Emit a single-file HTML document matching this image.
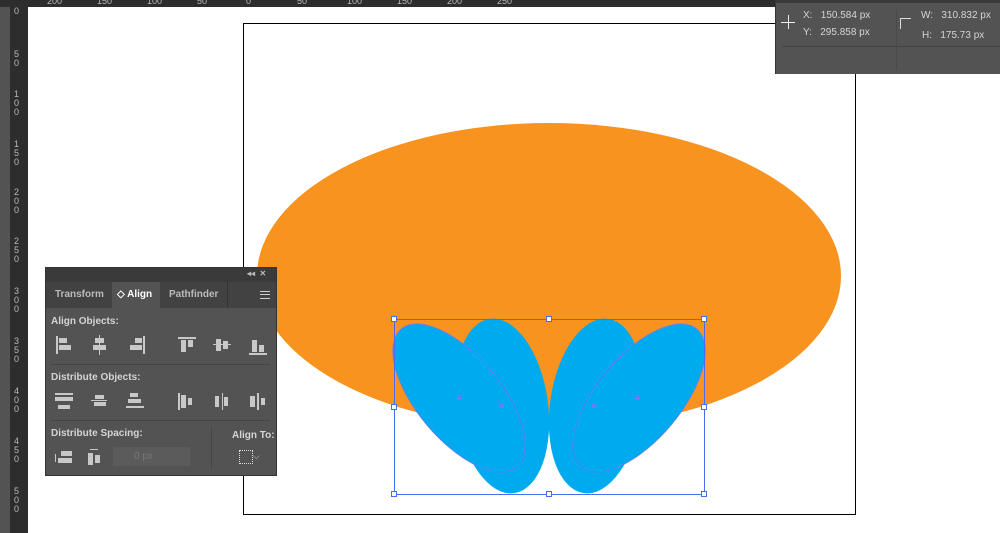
<!DOCTYPE html>
<html><head><style>
body{margin:0;width:1000px;height:533px;overflow:hidden;background:#fff;position:relative;font-family:"Liberation Sans",sans-serif}
.a{position:absolute}
.lbl{color:#d4d4d4;font-size:10px;font-weight:bold;position:absolute}
.ic{position:absolute;background:#c8c8c8}
.tk{position:absolute;color:#bbb;font-size:9px;line-height:9px}
.vt{position:absolute;color:#bbb;font-size:9px;line-height:9px;left:14px;width:8px}
</style></head><body>
<div class="a" style="left:0;top:0;width:10px;height:533px;background:#535353"></div>
<div class="a" style="left:10px;top:0;width:18px;height:533px;background:#2d2d2d"></div>
<div class="a" style="left:0;top:0;width:1000px;height:7px;background:#2d2d2d"></div>
<div class="tk" style="left:47px;top:-3px">200</div><div class="tk" style="left:97px;top:-3px">150</div><div class="tk" style="left:147px;top:-3px">100</div><div class="tk" style="left:197px;top:-3px">50</div><div class="tk" style="left:246px;top:-3px">0</div><div class="tk" style="left:297px;top:-3px">50</div><div class="tk" style="left:347px;top:-3px">100</div><div class="tk" style="left:397px;top:-3px">150</div><div class="tk" style="left:447px;top:-3px">200</div><div class="tk" style="left:497px;top:-3px">250</div>
<div class="vt" style="top:7px">0</div>
<div class="vt" style="top:50px">5<br>0</div>
<div class="vt" style="top:90px">1<br>0<br>0</div>
<div class="vt" style="top:140px">1<br>5<br>0</div>
<div class="vt" style="top:188px">2<br>0<br>0</div>
<div class="vt" style="top:237px">2<br>5<br>0</div>
<div class="vt" style="top:287px">3<br>0<br>0</div>
<div class="vt" style="top:337px">3<br>5<br>0</div>
<div class="vt" style="top:387px">4<br>0<br>0</div>
<div class="vt" style="top:437px">4<br>5<br>0</div>
<div class="vt" style="top:487px">5<br>0<br>0</div>
<div class="a" style="left:243px;top:23px;width:611px;height:490px;border:1px solid #000"></div>
<svg class="a" style="left:0;top:0" width="1000" height="533">
<ellipse cx="549" cy="276" rx="292" ry="153" fill="#f7931e"/>
<g fill="#00aaef">
<ellipse cx="459" cy="398" rx="42" ry="90" transform="rotate(-40 459 398)"/>
<ellipse cx="502" cy="406" rx="46" ry="88" transform="rotate(-8 502 406)"/>
<ellipse cx="639" cy="398" rx="42" ry="90" transform="rotate(40 639 398)"/>
<ellipse cx="596" cy="406" rx="46" ry="88" transform="rotate(8 596 406)"/>
</g>
<g fill="none" stroke="#6a7cf0" stroke-width="0.8">
<ellipse cx="459" cy="398" rx="42" ry="90" transform="rotate(-40 459 398)"/>
<ellipse cx="639" cy="398" rx="42" ry="90" transform="rotate(40 639 398)"/>
</g>
<g fill="#6a7cf0"><rect x="457" y="396" width="4" height="4"/><rect x="500" y="404" width="4" height="4"/><rect x="592" y="404" width="4" height="4"/><rect x="635" y="396" width="4" height="4"/></g>
<rect x="394.5" y="319.5" width="310" height="175" fill="none" stroke="#4a6cf0" stroke-width="1"/>
<g fill="#fff" stroke="#4a6cf0"><rect x="391.5" y="316.5" width="5" height="5"/><rect x="546.5" y="316.5" width="5" height="5"/><rect x="701.5" y="316.5" width="5" height="5"/><rect x="391.5" y="404.5" width="5" height="5"/><rect x="701.5" y="404.5" width="5" height="5"/><rect x="391.5" y="491.5" width="5" height="5"/><rect x="546.5" y="491.5" width="5" height="5"/><rect x="701.5" y="491.5" width="5" height="5"/></g>
</svg>
<div class="a" style="left:775px;top:0;width:225px;height:74px;background:#535353;border-left:1px solid #333"></div>
<div class="a" style="left:775px;top:0;width:225px;height:3px;background:#3a3a3a"></div>
<div class="a" style="left:782px;top:46px;width:218px;height:1px;background:#444"></div>
<div class="a" style="left:896px;top:10px;width:1px;height:60px;background:#4a4a4a"></div>
<div class="a" style="left:781px;top:22px;width:14px;height:1px;background:#eee"></div>
<div class="a" style="left:788px;top:15px;width:1px;height:14px;background:#eee"></div>
<div class="lbl" style="left:803px;top:10px;font-weight:normal">X:&nbsp;&nbsp; 150.584 px</div>
<div class="lbl" style="left:803px;top:27px;font-weight:normal">Y:&nbsp;&nbsp; 295.858 px</div>
<div class="a" style="left:900px;top:18px;width:10px;height:10px;border-top:1px solid #ddd;border-left:1px solid #ddd"></div>
<div class="lbl" style="left:921px;top:10px;font-weight:normal">W:&nbsp;&nbsp; 310.832 px</div>
<div class="lbl" style="left:922px;top:30px;font-weight:normal">H:&nbsp;&nbsp; 175.73 px</div>
<div class="a" style="left:45px;top:267px;width:232px;height:209px;background:#535353;border:1px solid #333;box-sizing:border-box"></div>
<div class="a" style="left:46px;top:268px;width:230px;height:14px;background:#3a3a3a"></div>
<div class="a" style="left:46px;top:282px;width:230px;height:26px;background:#424242"></div>
<div class="a" style="left:112px;top:282px;width:48px;height:26px;background:#535353"></div>
<div class="lbl" style="left:55px;top:289px;color:#bbb">Transform</div>
<div class="lbl" style="left:117px;top:289px;color:#fff">◇ Align</div>
<div class="lbl" style="left:169px;top:289px;color:#bbb">Pathfinder</div>
<div class="a" style="left:227px;top:282px;width:1px;height:26px;background:#333"></div>
<div class="a" style="left:260px;top:291px;width:10px;height:6px;border-top:1px solid #ccc;border-bottom:1px solid #ccc"></div>
<div class="a" style="left:260px;top:294px;width:10px;height:1px;background:#ccc"></div>
<div class="lbl" style="left:247px;top:269px;color:#bbb;font-size:8px">◂◂&nbsp; ✕</div>
<div class="lbl" style="left:51px;top:316px">Align Objects:</div>
<div class="a" style="left:51px;top:364px;width:219px;height:1px;background:#444"></div>
<div class="lbl" style="left:51px;top:372px">Distribute Objects:</div>
<div class="a" style="left:51px;top:420px;width:219px;height:1px;background:#444"></div>
<div class="lbl" style="left:51px;top:428px">Distribute Spacing:</div>
<div class="lbl" style="left:232px;top:430px">Align To:</div>
<div class="a" style="left:211px;top:427px;width:1px;height:42px;background:#444"></div>
<div class="a" style="left:113px;top:447px;width:77px;height:19px;background:#5b5b5b"></div>
<div class="lbl" style="left:134px;top:451px;color:#777;font-weight:normal">0 px</div>
<div class="ic" style="left:56px;top:336px;width:2px;height:18px"></div><div class="ic" style="left:59px;top:338px;width:8px;height:5px"></div><div class="ic" style="left:59px;top:345px;width:12px;height:5px"></div>
<div class="ic" style="left:99px;top:335px;width:1px;height:20px"></div><div class="ic" style="left:95px;top:338px;width:9px;height:5px"></div><div class="ic" style="left:93px;top:345px;width:13px;height:5px"></div>
<div class="ic" style="left:143px;top:336px;width:2px;height:18px"></div><div class="ic" style="left:135px;top:338px;width:7px;height:5px"></div><div class="ic" style="left:130px;top:345px;width:12px;height:5px"></div>
<div class="ic" style="left:178px;top:337px;width:18px;height:2px"></div><div class="ic" style="left:181px;top:340px;width:5px;height:12px"></div><div class="ic" style="left:188px;top:340px;width:5px;height:7px"></div>
<div class="ic" style="left:213px;top:344px;width:18px;height:1px"></div><div class="ic" style="left:216px;top:339px;width:5px;height:12px"></div><div class="ic" style="left:223px;top:341px;width:5px;height:8px"></div>
<div class="ic" style="left:249px;top:353px;width:18px;height:2px"></div><div class="ic" style="left:252px;top:340px;width:5px;height:12px"></div><div class="ic" style="left:259px;top:345px;width:5px;height:7px"></div>
<div class="ic" style="left:55px;top:393px;width:18px;height:12px;background:linear-gradient(#c8c8c8 0 2px,transparent 2px 4px,#c8c8c8 4px 8px,transparent 8px)"></div><div class="ic" style="left:58px;top:405px;width:12px;height:4px"></div>
<div class="ic" style="left:91px;top:396px;width:16px;height:10px;background:linear-gradient(transparent 0 4px,#c8c8c8 4px 5px,transparent 5px)"></div><div class="ic" style="left:95px;top:395px;width:9px;height:4px"></div><div class="ic" style="left:94px;top:402px;width:12px;height:4px"></div>
<div class="ic" style="left:130px;top:393px;width:8px;height:4px"></div><div class="ic" style="left:128px;top:399px;width:13px;height:4px"></div><div class="ic" style="left:126px;top:406px;width:18px;height:2px"></div>
<div class="ic" style="left:178px;top:393px;width:2px;height:17px"></div><div class="ic" style="left:181px;top:395px;width:5px;height:13px"></div><div class="ic" style="left:188px;top:398px;width:4px;height:7px"></div>
<div class="ic" style="left:215px;top:396px;width:4px;height:11px"></div><div class="ic" style="left:222px;top:393px;width:1px;height:17px"></div><div class="ic" style="left:224px;top:397px;width:4px;height:9px"></div>
<div class="ic" style="left:250px;top:396px;width:5px;height:11px"></div><div class="ic" style="left:257px;top:393px;width:2px;height:17px"></div><div class="ic" style="left:261px;top:398px;width:4px;height:7px"></div>
<div class="ic" style="left:61px;top:451px;width:11px;height:5px"></div><div class="ic" style="left:58px;top:458px;width:14px;height:5px"></div><div class="ic" style="left:55px;top:454px;width:1px;height:8px"></div>
<div class="ic" style="left:88px;top:453px;width:5px;height:12px"></div><div class="ic" style="left:95px;top:455px;width:5px;height:8px"></div><div class="ic" style="left:90px;top:449px;width:8px;height:1px"></div>
<div class="a" style="left:239px;top:450px;width:12px;height:12px;border:1px dotted #ddd"></div>
<div class="lbl" style="left:253px;top:451px;font-weight:normal;color:#ccc;font-size:9px">⌵</div>
</body></html>
